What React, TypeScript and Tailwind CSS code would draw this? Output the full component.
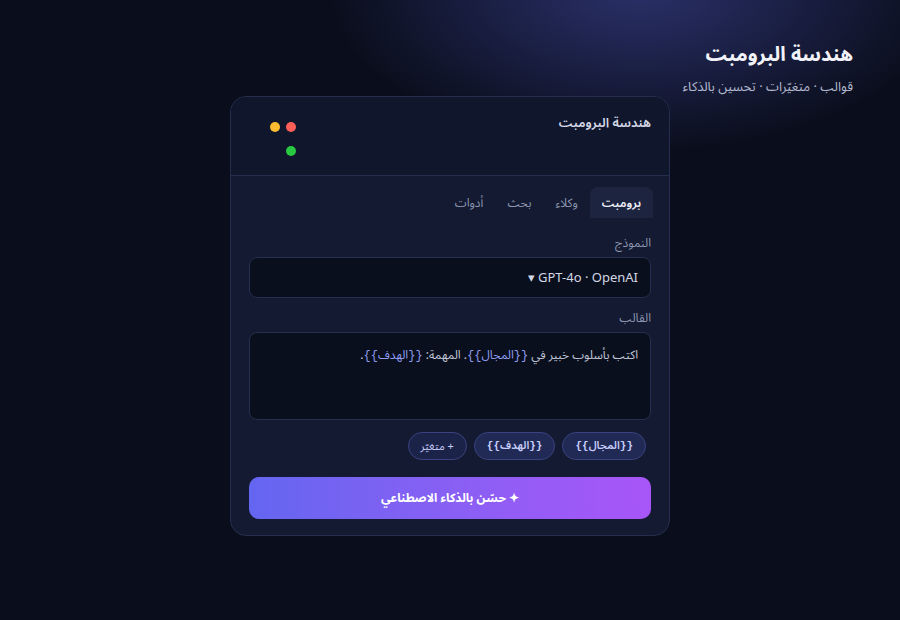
import React from 'react';

const tabs = ['برومبت', 'وكلاء', 'بحث', 'أدوات'];
const vars = ['{{المجال}}', '{{الهدف}}'];

function Var({ children }: { children: React.ReactNode }) {
    return (
        <span className="text-[#8f9cf2] font-['Liberation_Mono','Noto_Sans_Arabic',monospace]">
            {children}
        </span>
    );
}

export default function App() {
    return (
        <div
            dir="rtl"
            className="relative min-h-[620px] w-full overflow-hidden bg-[#0a0e1c] font-['Noto_Sans','Noto_Sans_Arabic',sans-serif]"
        >
            {/* soft glow behind the page header */}
            <div className="pointer-events-none absolute left-[330px] top-[-170px] h-[320px] w-[620px] rounded-full bg-[radial-gradient(closest-side,#2a3068_0%,#1c2148_45%,rgba(10,14,28,0)_100%)]" />

            <div className="relative px-[47px] pt-[40px]">
                <h1 className="text-[20px] font-bold leading-7 text-[#f1f3f9]">
                    هندسة البرومبت
                </h1>
                <p className="mt-2 text-[13px] leading-5 text-[#b4bad0]">
                    قوالب · متغيّرات · تحسين بالذكاء
                </p>
            </div>

            <div className="relative mx-auto w-[440px] overflow-hidden rounded-2xl border border-[#252e4c] bg-[#131a31]">
                <div className="flex items-start justify-between border-b border-[#252e4c] bg-[#10172d] pb-[19px] pl-[20px] pr-[18px] pt-[15px]">
                    <h2 className="text-[13px] font-semibold leading-5 text-[#d4d8e6]">
                        هندسة البرومبت
                    </h2>
                    <div className="ml-[19px] mt-[10px] flex w-[26px] flex-wrap gap-x-[6px] gap-y-[14px]">
                        <span className="h-[10px] w-[10px] rounded-full bg-[#ff5f57]" />
                        <span className="h-[10px] w-[10px] rounded-full bg-[#febc2e]" />
                        <span className="h-[10px] w-[10px] rounded-full bg-[#28c840]" />
                    </div>
                </div>

                <div className="px-[18px] pb-[16px] pt-[11px]">
                    <div className="-mr-[2px] flex">
                        {tabs.map((t, i) => (
                            <button
                                key={t}
                                className={
                                    i === 0
                                        ? 'h-[31px] rounded-t-lg bg-[#1d2440] px-3 text-[12px] font-semibold text-[#eef0f7]'
                                        : 'h-[31px] px-3 text-[12px] text-[#8d96b0]'
                                }
                            >
                                {t}
                            </button>
                        ))}
                    </div>

                    <label className="mt-[17px] block text-[12px] leading-4 text-[#8d96b0]">
                        النموذج
                    </label>
                    <div className="mt-[6px] flex h-[41px] items-center rounded-lg border border-[#252e4c] bg-[#0a0f1d] px-3 text-[13px] text-[#d4d8e6]">
                        GPT-4o · OpenAI ▾
                    </div>

                    <label className="mt-[12px] block text-[12px] leading-4 text-[#8d96b0]">
                        القالب
                    </label>
                    <div className="mt-[6px] h-[88px] rounded-lg border border-[#252e4c] bg-[#0a0f1d] px-3 pt-3 text-[12px] leading-5 text-[#c0c6d8]">
                        اكتب بأسلوب خبير في <Var>{'{{المجال}}'}</Var>. المهمة: <Var>{'{{الهدف}}'}</Var>.
                    </div>

                    <div className="mt-[12px] flex gap-[7px] pr-[5px]">
                        {vars.map((v) => (
                            <span
                                key={v}
                                className="flex h-[28px] items-center rounded-full border border-[#3a4280] bg-[#212955] px-3 font-['Liberation_Mono','Noto_Sans_Arabic',monospace] text-[11px] font-semibold text-[#c7cdfa]"
                            >
                                {v}
                            </span>
                        ))}
                        <span className="flex h-[28px] items-center rounded-full border border-[#3a4280] bg-[#1c2349] px-3 text-[11px] text-[#c7cdfa]">
                            + متغيّر
                        </span>
                    </div>

                    <button className="mt-[17px] flex h-[42px] w-full items-center justify-center rounded-[10px] bg-gradient-to-l from-[#a855f7] to-[#6366f1] text-[12px] font-bold text-white">
                        ✦ حسّن بالذكاء الاصطناعي
                    </button>
                </div>
            </div>
        </div>
    );
}
